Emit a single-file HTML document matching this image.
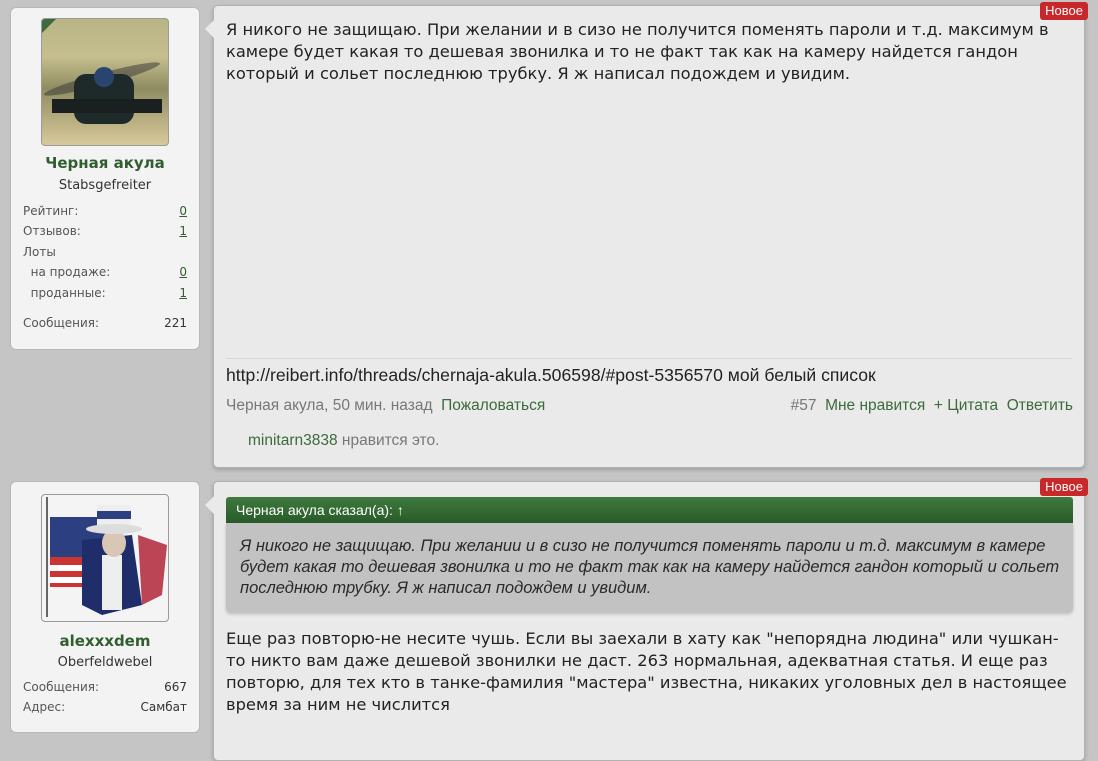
<!DOCTYPE html>
<html><head><meta charset="utf-8"><style>
*{margin:0;padding:0;box-sizing:border-box}
body{width:1098px;height:744px;overflow:hidden;background:#c4c5c4;font-family:"DejaVu Sans","Liberation Sans",sans-serif;color:#222;position:relative}
.up{position:absolute;left:10px;width:190px;background:#f3f3f3;border:1px solid #b8b8b8;border-radius:6px}
.av{position:absolute;left:30px;width:128px;height:128px;border:1px solid #9a9a9a;border-radius:4px;overflow:hidden}
.name{position:absolute;left:0;width:188px;text-align:center;font-weight:bold;font-size:15px;color:#2f5f2f}
.rank{position:absolute;left:0;width:188px;text-align:center;font-size:13px;color:#333}
.row{position:absolute;left:12px;width:164px;font-size:12px;color:#555;height:16px}
.row span{position:absolute;right:0;color:#333}
.row u{color:#2f5f2f}
.msg{position:absolute;left:213px;width:872px;background:#eaeaea;border:1px solid #b2b2b2;border-radius:5px;box-shadow:0 2px 4px rgba(0,0,0,.2)}
.arr{position:absolute;left:-9px;top:14px;width:0;height:0;border-top:9px solid transparent;border-bottom:9px solid transparent;border-right:9px solid #eaeaea}
.new{position:absolute;right:-4px;top:-4px;background:#c8282a;color:#fff;font-family:"Liberation Sans",sans-serif;font-size:13px;padding:1px 5px 2px;border-radius:3px}
.txt{position:absolute;left:12px;font-size:16.3px;line-height:22px;color:#222}
.foot{font-family:"Liberation Sans",sans-serif;font-size:15.5px;position:absolute;color:#777;white-space:nowrap}
.g{color:#3b6b3b}
</style></head><body>

<div class="up" style="top:7px;height:343px">
 <div class="av" style="top:10px;background:linear-gradient(180deg,#b9b486 0%,#c5bf8e 30%,#8f8c62 55%,#d8c99a 100%)">
  <svg width="128" height="128"><path d="M0 0 L14 0 L0 14Z" fill="#3e6a3e"/><ellipse cx="60" cy="60" rx="60" ry="6" fill="#333" opacity=".5" transform="rotate(-15 60 60)"/><rect x="32" y="55" width="60" height="50" rx="12" fill="#1e2a2a"/><rect x="10" y="80" width="110" height="14" fill="#1a2020"/><circle cx="62" cy="58" r="10" fill="#2a4470"/></svg>
 </div>
 <div class="name" style="top:146px">Черная акула</div>
 <div class="rank" style="top:170px">Stabsgefreiter</div>
 <div class="row" style="top:196px">Рейтинг:<span><u>0</u></span></div>
 <div class="row" style="top:216px">Отзывов:<span><u>1</u></span></div>
 <div class="row" style="top:237px">Лоты</div>
 <div class="row" style="top:257px">&nbsp;&nbsp;на продаже:<span><u>0</u></span></div>
 <div class="row" style="top:278px">&nbsp;&nbsp;проданные:<span><u>1</u></span></div>
 <div class="row" style="top:308px">Сообщения:<span>221</span></div>
</div>

<div class="msg" style="top:5px;height:463px">
 <div class="arr"></div>
 <div class="new">Новое</div>
 <div class="txt" style="top:13px;width:852px">Я никого не защищаю. При желании и в сизо не получится поменять пароли и т.д. максимум в камере будет какая то дешевая звонилка и то не факт так как на камеру найдется гандон который и сольет последнюю трубку. Я ж написал подождем и увидим.</div>
 <div style="position:absolute;left:12px;right:12px;top:352px;border-top:1px solid #d6d6d6"></div>
 <div class="foot" style="left:12px;top:359px;font-size:17.6px;color:#222">http://reibert.info/threads/chernaja-akula.506598/#post-5356570 мой белый список</div>
 <div class="foot" style="left:12px;top:391px">Черная акула, 50 мин. назад &nbsp;<span class="g">Пожаловаться</span></div>
 <div class="foot" style="right:11px;top:391px">#57 &nbsp;<span class="g">Мне нравится</span> &nbsp;<span class="g">+ Цитата</span> &nbsp;<span class="g">Ответить</span></div>
 <div class="foot" style="left:34px;top:426px"><span class="g">minitarn3838</span> нравится это.</div>
</div>

<div class="up" style="top:481px;height:252px">
 <div class="av" style="top:12px;background:#f4f4f4">
  <svg width="128" height="128"><rect x="8" y="22" width="55" height="70" fill="#c33"/><rect x="8" y="22" width="55" height="40" fill="#2c3f80"/><rect x="8" y="70" width="55" height="6" fill="#fff"/><rect x="8" y="82" width="55" height="6" fill="#fff"/><rect x="4" y="2" width="2" height="120" fill="#666"/><path d="M40 45 L90 40 L100 110 L60 120 L40 110Z" fill="#1f2e6a"/><rect x="60" y="60" width="20" height="55" fill="#eee"/><ellipse cx="72" cy="48" rx="12" ry="14" fill="#d9c7b5"/><rect x="55" y="10" width="34" height="24" fill="#eee"/><rect x="55" y="16" width="34" height="8" fill="#2c3f80"/><ellipse cx="72" cy="34" rx="28" ry="5" fill="#ddd"/><path d="M96 40 L125 50 L120 100 L100 110Z" fill="#b45"/></svg>
 </div>
 <div class="name" style="top:150px">alexxxdem</div>
 <div class="rank" style="top:173px">Oberfeldwebel</div>
 <div class="row" style="top:198px">Сообщения:<span>667</span></div>
 <div class="row" style="top:218px">Адрес:<span>Самбат</span></div>
</div>

<div class="msg" style="top:481px;height:280px">
 <div class="arr"></div>
 <div class="new">Новое</div>
 <div style="position:absolute;left:12px;top:15px;width:847px;height:26px;background:linear-gradient(#3f7a3f,#285a28);color:#fff;font-family:'Liberation Sans',sans-serif;font-size:14px;line-height:26px;padding-left:10px;border-radius:3px 3px 0 0">Черная акула сказал(а): ↑</div>
 <div style="position:absolute;left:12px;top:41px;width:847px;height:89px;background:#c2c2c2;border-radius:0 0 4px 4px;box-shadow:0 2px 3px rgba(0,0,0,.2);padding:13px 8px 13px 14px;font-family:'Liberation Sans',sans-serif;font-style:italic;font-size:16.5px;line-height:21px;color:#2a2a2a">Я никого не защищаю. При желании и в сизо не получится поменять пароли и т.д. максимум в камере будет какая то дешевая звонилка и то не факт так как на камеру найдется гандон который и сольет последнюю трубку. Я ж написал подождем и увидим.</div>
 <div class="txt" style="top:146px;width:852px">Еще раз повторю-не несите чушь. Если вы заехали в хату как "непорядна людина" или чушкан-то никто вам даже дешевой звонилки не даст. 263 нормальная, адекватная статья. И еще раз повторю, для тех кто в танке-фамилия "мастера" известна, никаких уголовных дел в настоящее время за ним не числится</div>
</div>
</body></html>
